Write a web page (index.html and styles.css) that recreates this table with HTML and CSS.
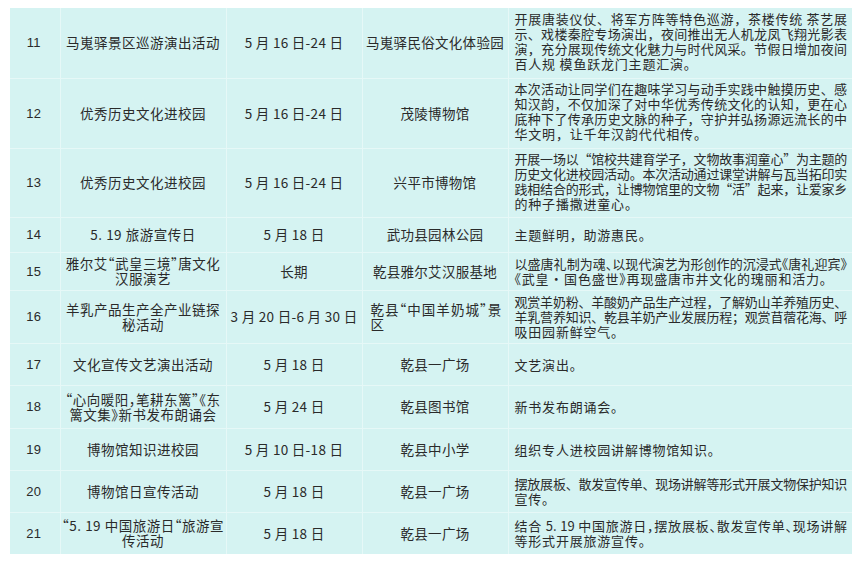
FILE: index.html
```html
<!DOCTYPE html>
<html lang="zh-CN">
<head>
<meta charset="utf-8">
<title>活动安排表</title>
<link rel="stylesheet" href="styles.css">
</head>
<body>
<table class="schedule">
  <colgroup>
    <col class="c-no"><col class="c-name"><col class="c-date"><col class="c-place"><col class="c-desc">
  </colgroup>
  <tbody>
    <tr class="h70">
      <td class="num">11</td><td class="name">马嵬驿景区巡游演出活动</td><td>5 月 16 日-24 日</td><td>马嵬驿民俗文化体验园</td>
      <td class="desc tall"><span class="ln">开展唐装仪仗、将军方阵等特色巡游，茶楼传统 茶艺展</span><span class="ln">示、戏楼秦腔专场演出，夜间推出无人机龙凤飞翔光影表</span><span class="ln">演，充分展现传统文化魅力与时代风采。节假日增加夜间</span><span class="ln end">百人规 模鱼跃龙门主题汇演。</span></td>
    </tr>
    <tr class="h70">
      <td class="num">12</td><td class="name">优秀历史文化进校园</td><td>5 月 16 日-24 日</td><td>茂陵博物馆</td>
      <td class="desc tall"><span class="ln">本次活动让同学们在趣味学习与动手实践中触摸历史、感</span><span class="ln">知汉韵，不仅加深了对中华优秀传统文化的认知，更在心</span><span class="ln">底种下了传承历史文脉的种子，守护并弘扬源远流长的中</span><span class="ln end">华文明，让千年汉韵代代相传。</span></td>
    </tr>
    <tr class="h69">
      <td class="num">13</td><td class="name">优秀历史文化进校园</td><td>5 月 16 日-24 日</td><td>兴平市博物馆</td>
      <td class="desc tall"><span class="ln tight">开展一场以“馆校共建育学子，文物故事润童心”为主题的</span><span class="ln tight">历史文化进校园活动。本次活动通过课堂讲解与瓦当拓印实</span><span class="ln tight">践相结合的形式，让博物馆里的文物“活”起来，让爱家乡</span><span class="ln end">的种子播撒进童心。</span></td>
    </tr>
    <tr class="h35">
      <td class="num">14</td><td class="name">5. 19 旅游宣传日</td><td>5 月 18 日</td><td>武功县园林公园</td>
      <td class="desc"><span class="ln end">主题鲜明，助游惠民。</span></td>
    </tr>
    <tr class="h38">
      <td class="num">15</td><td class="name">雅尔艾“武皇三境”唐文化<br>汉服演艺</td><td>长期</td><td>乾县雅尔艾汉服基地</td>
      <td class="desc"><span class="ln halt">以盛唐礼制为魂、以现代演艺为形创作的沉浸式《唐礼迎宾》</span><span class="ln end halt">《武皇 · 国色盛世》再现盛唐市井文化的瑰丽和活力。</span></td>
    </tr>
    <tr class="h53">
      <td class="num">16</td><td class="name">羊乳产品生产全产业链探<br>秘活动</td><td>3 月 20 日-6 月 30 日</td><td class="left"><span class="ln">乾县“中国羊奶城”景</span><span class="ln end">区</span></td>
      <td class="desc"><span class="ln tight">观赏羊奶粉、羊酸奶产品生产过程，了解奶山羊养殖历史、</span><span class="ln tight">羊乳营养知识、乾县羊奶产业发展历程；观赏苜蓿花海、呼</span><span class="ln end">吸田园新鲜空气。</span></td>
    </tr>
    <tr class="h42">
      <td class="num">17</td><td class="name">文化宣传文艺演出活动</td><td>5 月 18 日</td><td>乾县一广场</td>
      <td class="desc"><span class="ln end">文艺演出。</span></td>
    </tr>
    <tr class="h43">
      <td class="num">18</td><td class="name">“心向暖阳，笔耕东篱”《东<br>篱文集》新书发布朗诵会</td><td>5 月 24 日</td><td>乾县图书馆</td>
      <td class="desc"><span class="ln end">新书发布朗诵会。</span></td>
    </tr>
    <tr class="h42">
      <td class="num">19</td><td class="name">博物馆知识进校园</td><td>5 月 10 日-18 日</td><td>乾县中小学</td>
      <td class="desc"><span class="ln end">组织专人进校园讲解博物馆知识。</span></td>
    </tr>
    <tr class="h42">
      <td class="num">20</td><td class="name">博物馆日宣传活动</td><td>5 月 18 日</td><td>乾县一广场</td>
      <td class="desc"><span class="ln tight">摆放展板、散发宣传单、现场讲解等形式开展文物保护知识</span><span class="ln end">宣传。</span></td>
    </tr>
    <tr class="h42">
      <td class="num">21</td><td class="name">“5. 19 中国旅游日“旅游宣<br>传活动</td><td>5 月 18 日</td><td>乾县一广场</td>
      <td class="desc"><span class="ln halt">结合 5. 19 中国旅游日，摆放展板、散发宣传单、现场讲解</span><span class="ln end">等形式开展旅游宣传。</span></td>
    </tr>
  </tbody>
</table>
</body>
</html>
```
FILE: styles.css
```css
html, body {
  margin: 0;
  padding: 0;
  background: #ffffff;
}
body {
  padding: 8px 12px 0 10px;
  font-family: "Noto Sans CJK SC", "Noto Sans", sans-serif;
  color: #2a2a2a;
}
.schedule {
  border-collapse: collapse;
  table-layout: fixed;
  width: 842px;
  background: #d5f3f2;
  font-size: 13.5px;
  line-height: 15px;
}
.c-no { width: 50px; }
.c-name { width: 166px; }
.c-date { width: 136px; }
.c-place { width: 146px; }
.c-desc { width: 344px; }
.schedule td {
  border: 1.5px solid #e6f8f7;
  text-align: center;
  vertical-align: middle;
  padding: 0;
  letter-spacing: 0.3px;
  white-space: nowrap;
  overflow: hidden;
}
.schedule tr:first-child td { border-top: none; }
.schedule tr:last-child td { border-bottom: none; }
.schedule td:first-child { border-left: none; }
.schedule td:last-child { border-right: none; }
.schedule td.num {
  font-family: "Liberation Sans", Arial, sans-serif;
  font-size: 13px;
  padding-right: 2px;
}
.schedule td.name {
  letter-spacing: 0.5px;
  font-feature-settings: "halt";
}
.schedule td.left {
  text-align: left;
  padding: 0 6px 0 8px;
  font-feature-settings: "halt";
}
.schedule td.desc {
  text-align: left;
  padding: 0 5px 0 6px;
  font-size: 13px;
  letter-spacing: 0;
}
.schedule td.desc.tall {
  padding-bottom: 4px;
}
.ln {
  display: block;
  white-space: nowrap;
  text-align: justify;
  text-align-last: justify;
  text-justify: inter-character;
}
.ln.tight {
  letter-spacing: -0.35px;
}
.ln.halt {
  font-feature-settings: "halt";
}
.ln.end {
  text-align-last: left;
  letter-spacing: 0.8px;
}
.h70 { height: 70px; }
.h69 { height: 69px; }
.h35 { height: 35px; }
.h38 { height: 38px; }
.h53 { height: 53px; }
.h42 { height: 42px; }
.h43 { height: 43px; }
```
